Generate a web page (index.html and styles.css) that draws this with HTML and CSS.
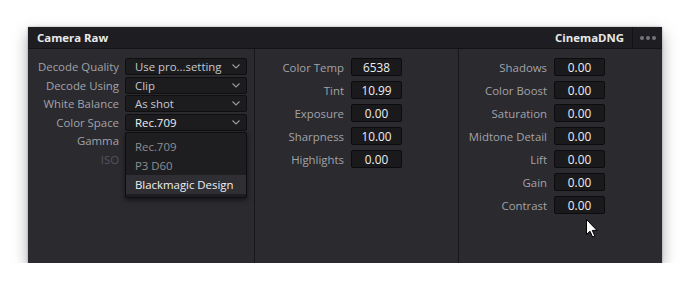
FILE: index.html
```html
<!DOCTYPE html>
<html>
<head>
<meta charset="utf-8">
<link rel="stylesheet" href="styles.css">
</head>
<body>
<div class="panel">
  <div class="header">
    <div class="title">Camera Raw</div>
    <div class="header-right">
      <div class="format">CinemaDNG</div>
      <div class="more"><span></span><span></span><span></span></div>
    </div>
  </div>
  <div class="content">
    <div class="col col-left">
      <div class="grid grid-left">
        <div class="label">Decode Quality</div>
        <div class="select"><span>Use pro...setting</span><svg class="chev" viewBox="0 0 8 5"><path d="M0.5 0.5 L4 4 L7.5 0.5"/></svg></div>
        <div class="label">Decode Using</div>
        <div class="select"><span>Clip</span><svg class="chev" viewBox="0 0 8 5"><path d="M0.5 0.5 L4 4 L7.5 0.5"/></svg></div>
        <div class="label">White Balance</div>
        <div class="select"><span>As shot</span><svg class="chev" viewBox="0 0 8 5"><path d="M0.5 0.5 L4 4 L7.5 0.5"/></svg></div>
        <div class="label">Color Space</div>
        <div class="select open"><span class="bright">Rec.709</span><svg class="chev" viewBox="0 0 8 5"><path d="M0.5 0.5 L4 4 L7.5 0.5"/></svg>
          <div class="menu">
            <div class="item">Rec.709</div>
            <div class="item">P3 D60</div>
            <div class="item active">Blackmagic Design</div>
          </div>
        </div>
        <div class="label">Gamma</div>
        <div class="empty"></div>
        <div class="label dim">ISO</div>
        <div class="empty"></div>
      </div>
    </div>
    <div class="col col-mid">
      <div class="grid grid-num">
        <div class="label">Color Temp</div><div class="num">6538</div>
        <div class="label">Tint</div><div class="num">10.99</div>
        <div class="label">Exposure</div><div class="num">0.00</div>
        <div class="label">Sharpness</div><div class="num">10.00</div>
        <div class="label">Highlights</div><div class="num">0.00</div>
      </div>
    </div>
    <div class="col col-right">
      <div class="grid grid-num grid-r">
        <div class="label">Shadows</div><div class="num">0.00</div>
        <div class="label">Color Boost</div><div class="num">0.00</div>
        <div class="label">Saturation</div><div class="num">0.00</div>
        <div class="label">Midtone Detail</div><div class="num">0.00</div>
        <div class="label">Lift</div><div class="num">0.00</div>
        <div class="label">Gain</div><div class="num">0.00</div>
        <div class="label">Contrast</div><div class="num contrast">0.00
          <svg class="cursor" viewBox="0 0 12 19" width="12" height="19"><path d="M0.5 0.5 L0.5 15.5 L4 12.2 L6.6 18 L8.8 17 L6.3 11.4 L11 11.4 Z" fill="#fff" stroke="#000" stroke-width="1" stroke-linejoin="round"/></svg>
        </div>
      </div>
    </div>
  </div>
</div>
</body>
</html>
```

FILE: styles.css
```css
* { box-sizing: border-box; }
html, body { margin: 0; background: #ffffff; }
body {
  padding: 27px 0 0 28px;
  font-family: "Open Sans", "Noto Sans", sans-serif;
  font-size: 11.4px;
}
.panel {
  width: 634px;
  height: 236px;
  background: #2a2a2f;
  box-shadow: 0 6px 14px rgba(0,0,0,0.35), 0 0 2px rgba(0,0,0,0.3);
  display: flex;
  flex-direction: column;
}
.header {
  height: 22px;
  background: #1e1e22;
  border-bottom: 1px solid #141416;
  display: flex;
  align-items: center;
  justify-content: space-between;
  padding-left: 9px;
}
.title, .format {
  color: #e9e9ea;
  font-weight: 700;
  font-size: 11.4px;
}
.header-right { display: flex; align-items: center; height: 100%; }
.format { padding-right: 8px; }
.more {
  height: 100%;
  border-left: 1px solid #131315;
  width: 30px;
  display: flex;
  align-items: center;
  justify-content: center;
  gap: 2px;
}
.more span { width: 4px; height: 4px; border-radius: 50%; background: #74747a; }
.content { flex: 1; display: flex; }
.col { padding-top: 9px; }
.col-left { width: 227px; border-right: 1px solid #18181b; }
.col-mid { width: 204px; border-right: 1px solid #18181b; }
.col-right { flex: 1; }
.grid { display: grid; align-items: center; }
.grid-left {
  grid-template-columns: 91px 122px;
  column-gap: 6px;
  grid-auto-rows: 17px;
  row-gap: 1.5px;
}
.label {
  color: #a3a3a8;
  text-align: right;
  white-space: nowrap;
  line-height: 17px;
}
.label.dim { color: #55555a; }
.select {
  position: relative;
  height: 17px;
  background: #1c1c1f;
  border: 1px solid #0f0f11;
  border-radius: 2px;
  color: #c8c8cc;
  display: flex;
  align-items: center;
  justify-content: space-between;
  padding: 0 6px 0 9px;
  line-height: 15px;
}
.select .bright { color: #f0f0f2; }
.chev { width: 8px; height: 5px; fill: none; stroke: #9a9aa0; stroke-width: 1.1; }
.menu {
  position: absolute;
  left: -1px;
  top: 17px;
  width: 122px;
  background: #1e1e21;
  border: 1px solid #0e0e10;
  border-radius: 2px;
  box-shadow: 0 2px 5px rgba(0,0,0,0.5);
  padding: 4px 0 3px;
  z-index: 2;
}
.item {
  height: 19px;
  line-height: 19px;
  padding-left: 9px;
  color: #8e8e93;
}
.item.active { background: #2e2e33; color: #f0f0f2; }
.grid-num {
  grid-template-columns: 89px 51px;
  column-gap: 7px;
  grid-auto-rows: 18px;
  row-gap: 5px;
}
.grid-r { grid-template-columns: 88px 51px; }
.num {
  position: relative;
  height: 18px;
  background: #1a1a1c;
  border: 1px solid #0c0c0e;
  border-radius: 2px;
  color: #eeeef0;
  text-align: center;
  line-height: 16px;
  font-size: 11.8px;
}
.cursor { position: absolute; left: 31px; top: 22px; }
```
